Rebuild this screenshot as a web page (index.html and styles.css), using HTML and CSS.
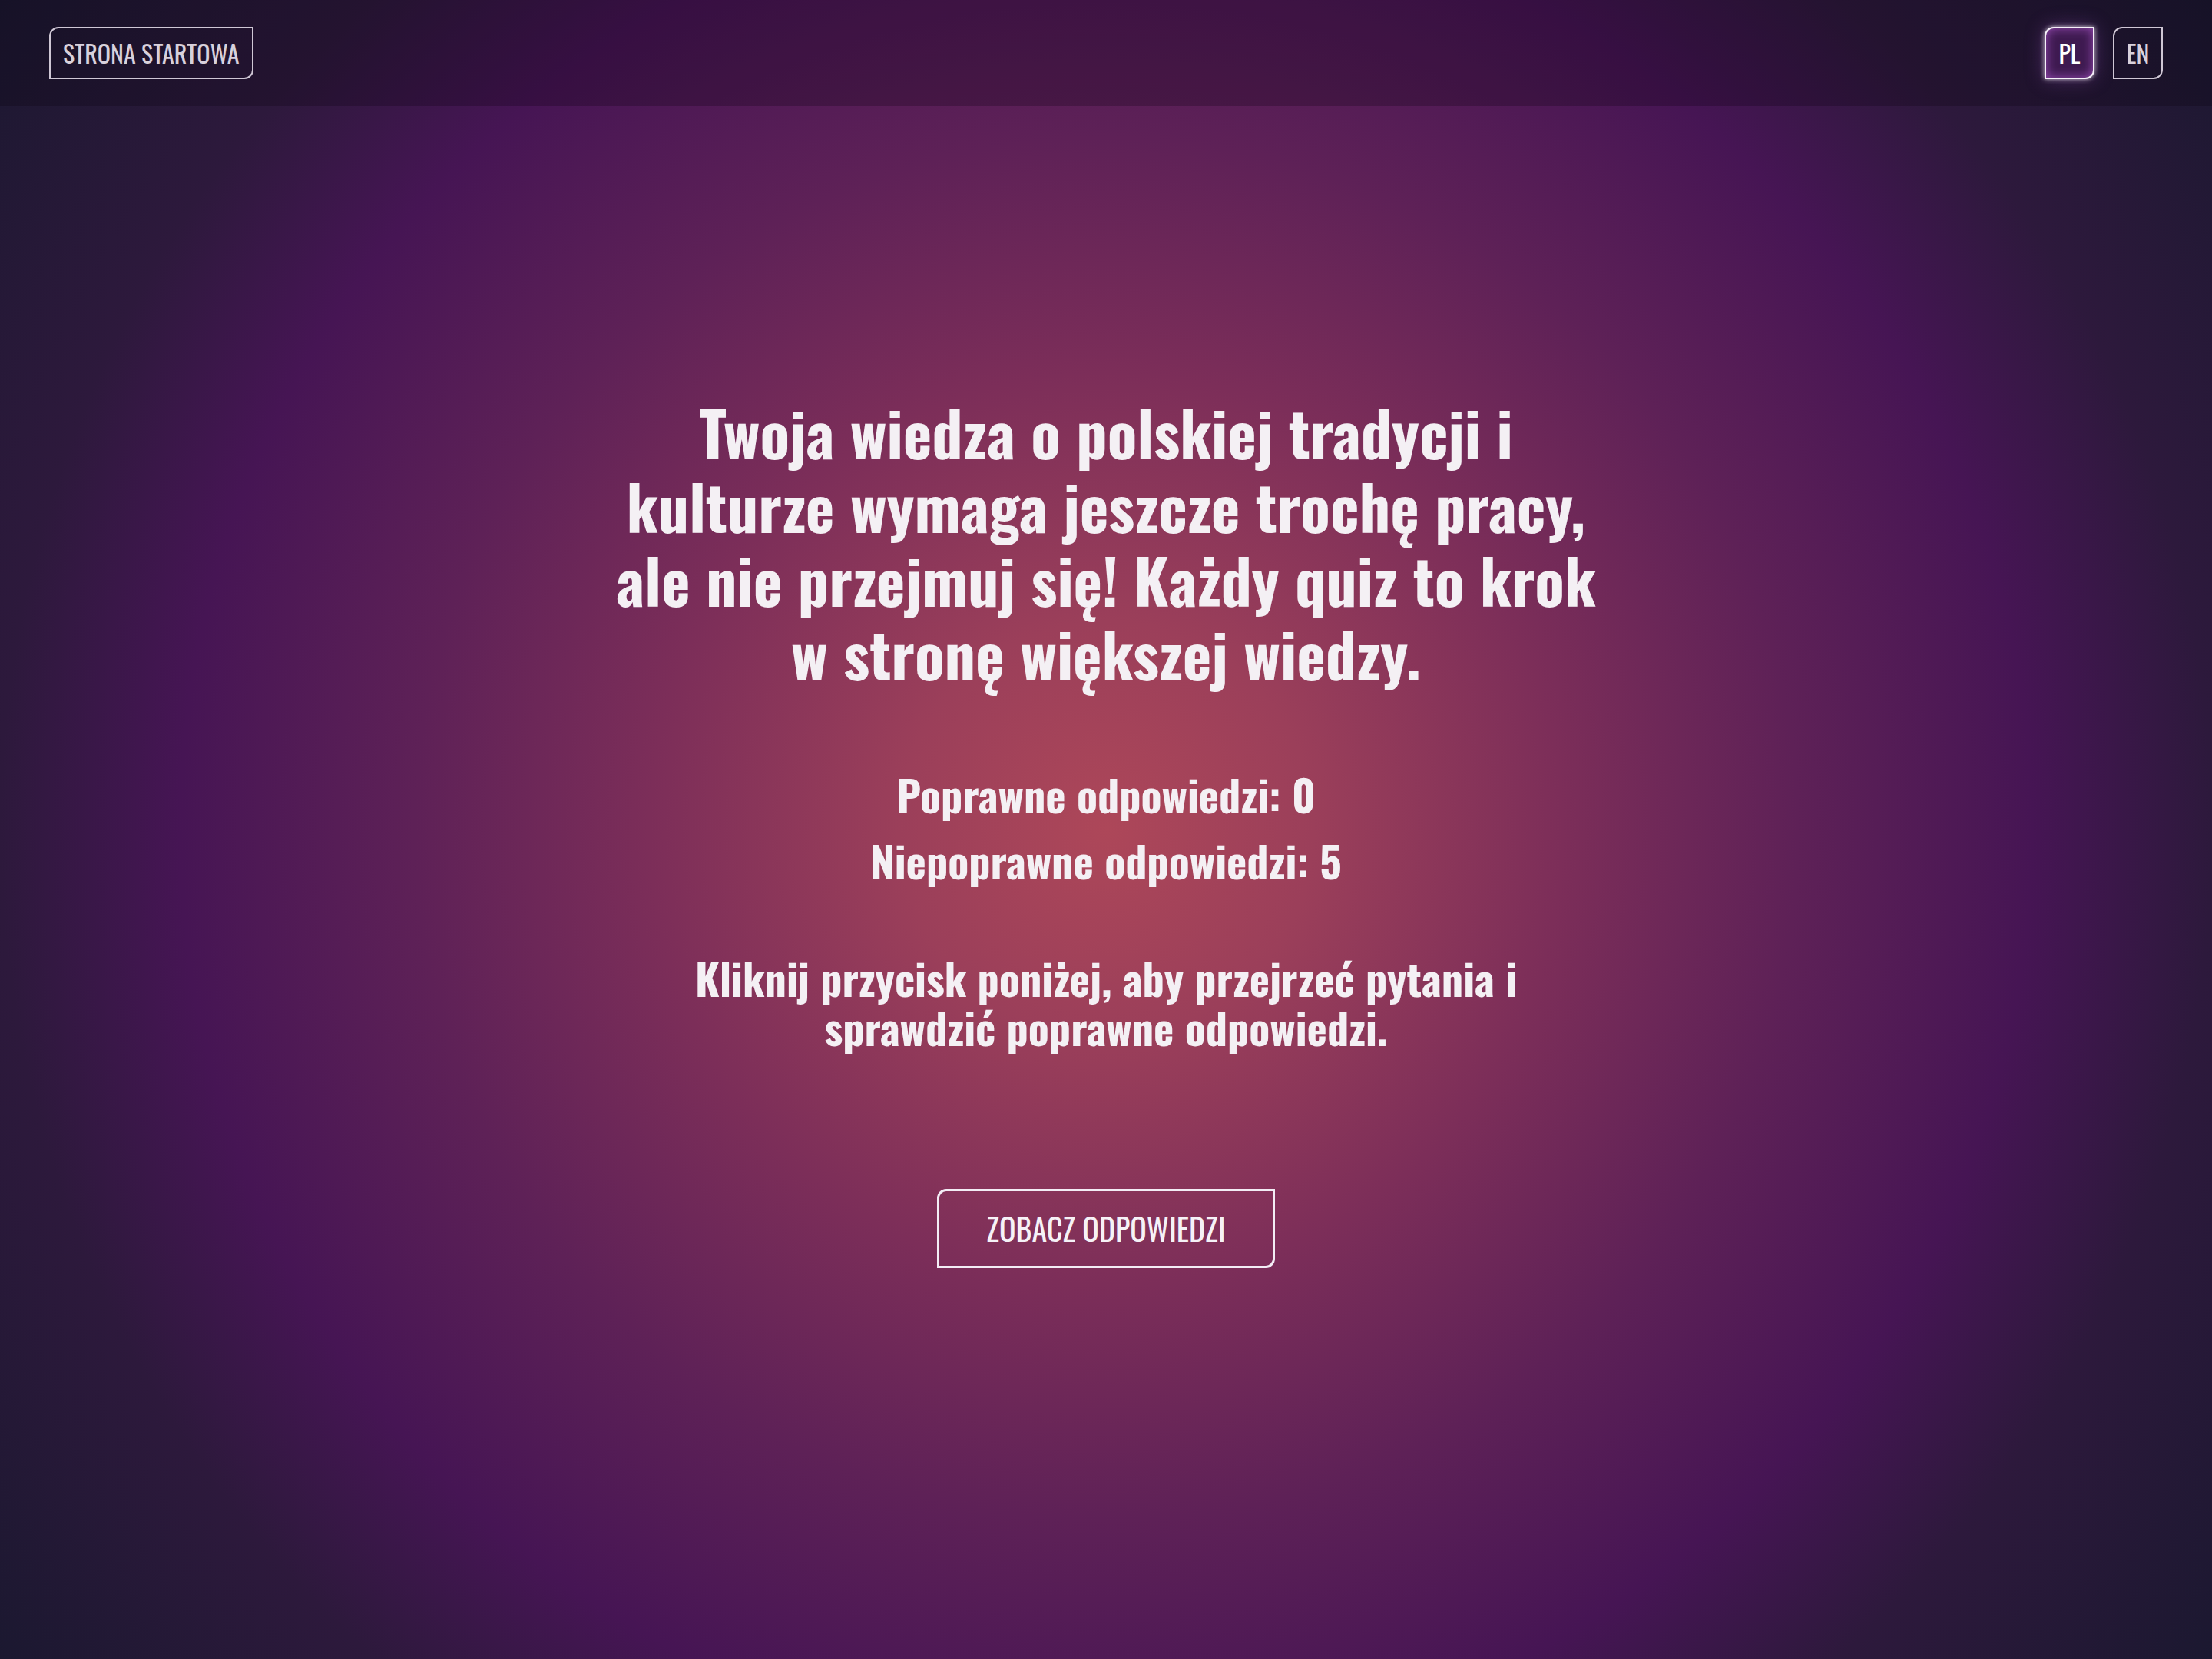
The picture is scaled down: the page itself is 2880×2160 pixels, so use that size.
FILE: index.html
```html
<!DOCTYPE html>
<html lang="pl">
<head>
<meta charset="utf-8">
<title>Wynik quizu</title>
<link rel="stylesheet" href="styles.css">
</head>
<body>
<header class="topbar">
  <a class="nav-btn home-btn" href="#">STRONA STARTOWA</a>
  <nav class="lang">
    <a class="nav-btn lang-btn active" href="#">PL</a>
    <a class="nav-btn lang-btn" href="#">EN</a>
  </nav>
</header>
<main class="result">
  <h1 class="result-title">Twoja wiedza o polskiej tradycji i kulturze wymaga jeszcze trochę pracy, ale nie przejmuj się! Każdy quiz to krok w stronę większej wiedzy.</h1>
  <div class="stats">
    <p class="stat">Poprawne odpowiedzi: 0</p>
    <p class="stat">Niepoprawne odpowiedzi: 5</p>
  </div>
  <p class="hint">Kliknij przycisk poniżej, aby przejrzeć pytania i sprawdzić poprawne odpowiedzi.</p>
  <a class="answers-btn" href="#">ZOBACZ ODPOWIEDZI</a>
</main>
</body>
</html>
```
FILE: styles.css
```css
* { box-sizing: border-box; }

html, body { margin: 0; padding: 0; }

body {
  min-height: 100vh;
  font-family: "Oswald", "Roboto Condensed", "Liberation Sans", sans-serif;
  color: #f4f0f4;
  background: radial-gradient(circle 1800px at 50% 50%,
    #ad4759 0%,
    #9b3f5a 15%,
    #7c2e59 33%,
    #5e2157 50%,
    #461554 67%,
    #2d193c 80%,
    #1b1830 100%);
}

.topbar {
  height: 138px;
  padding: 0 64px;
  display: flex;
  align-items: center;
  justify-content: space-between;
  background: rgba(8, 2, 14, 0.24);
}

.nav-btn {
  display: flex;
  align-items: center;
  justify-content: center;
  height: 68px;
  padding: 0 16px;
  border: 2px solid #cfc7d5;
  border-radius: 12px 0 12px 0;
  color: #d8d1dc;
  font-size: 32px;
  font-weight: 400;
  text-decoration: none;
  line-height: 1;
}

.lang {
  display: flex;
  gap: 24px;
}

.lang-btn {
  width: 65px;
  padding: 0;
}

.lang-btn.active {
  color: #ffffff;
  border-color: #f6f0fa;
  background: #3e1a50;
  box-shadow:
    0 0 6px rgba(255, 255, 255, 0.75),
    0 0 26px rgba(170, 90, 210, 0.35),
    inset 0 0 14px rgba(160, 80, 190, 0.9);
}

.result {
  display: flex;
  flex-direction: column;
  align-items: center;
  text-align: center;
  padding-top: 376px;
  padding-bottom: 100px;
}

.result-title {
  max-width: 1300px;
  margin: 0;
  font-size: 80px;
  font-weight: 700;
  line-height: 96px;
}

.stats {
  margin-top: 93px;
}

.stat {
  margin: 0;
  font-size: 56px;
  font-weight: 700;
  line-height: 86px;
}

.hint {
  max-width: 1200px;
  margin: 78px 0 0;
  font-size: 56px;
  font-weight: 700;
  line-height: 64px;
}

.answers-btn {
  display: block;
  margin-top: 179px;
  height: 103px;
  padding: 0 61px;
  border: 3px solid #f3edf5;
  border-radius: 12px 0 12px 0;
  color: #f6f2f7;
  font-size: 40px;
  font-weight: 400;
  line-height: 97px;
  text-decoration: none;
}
```
